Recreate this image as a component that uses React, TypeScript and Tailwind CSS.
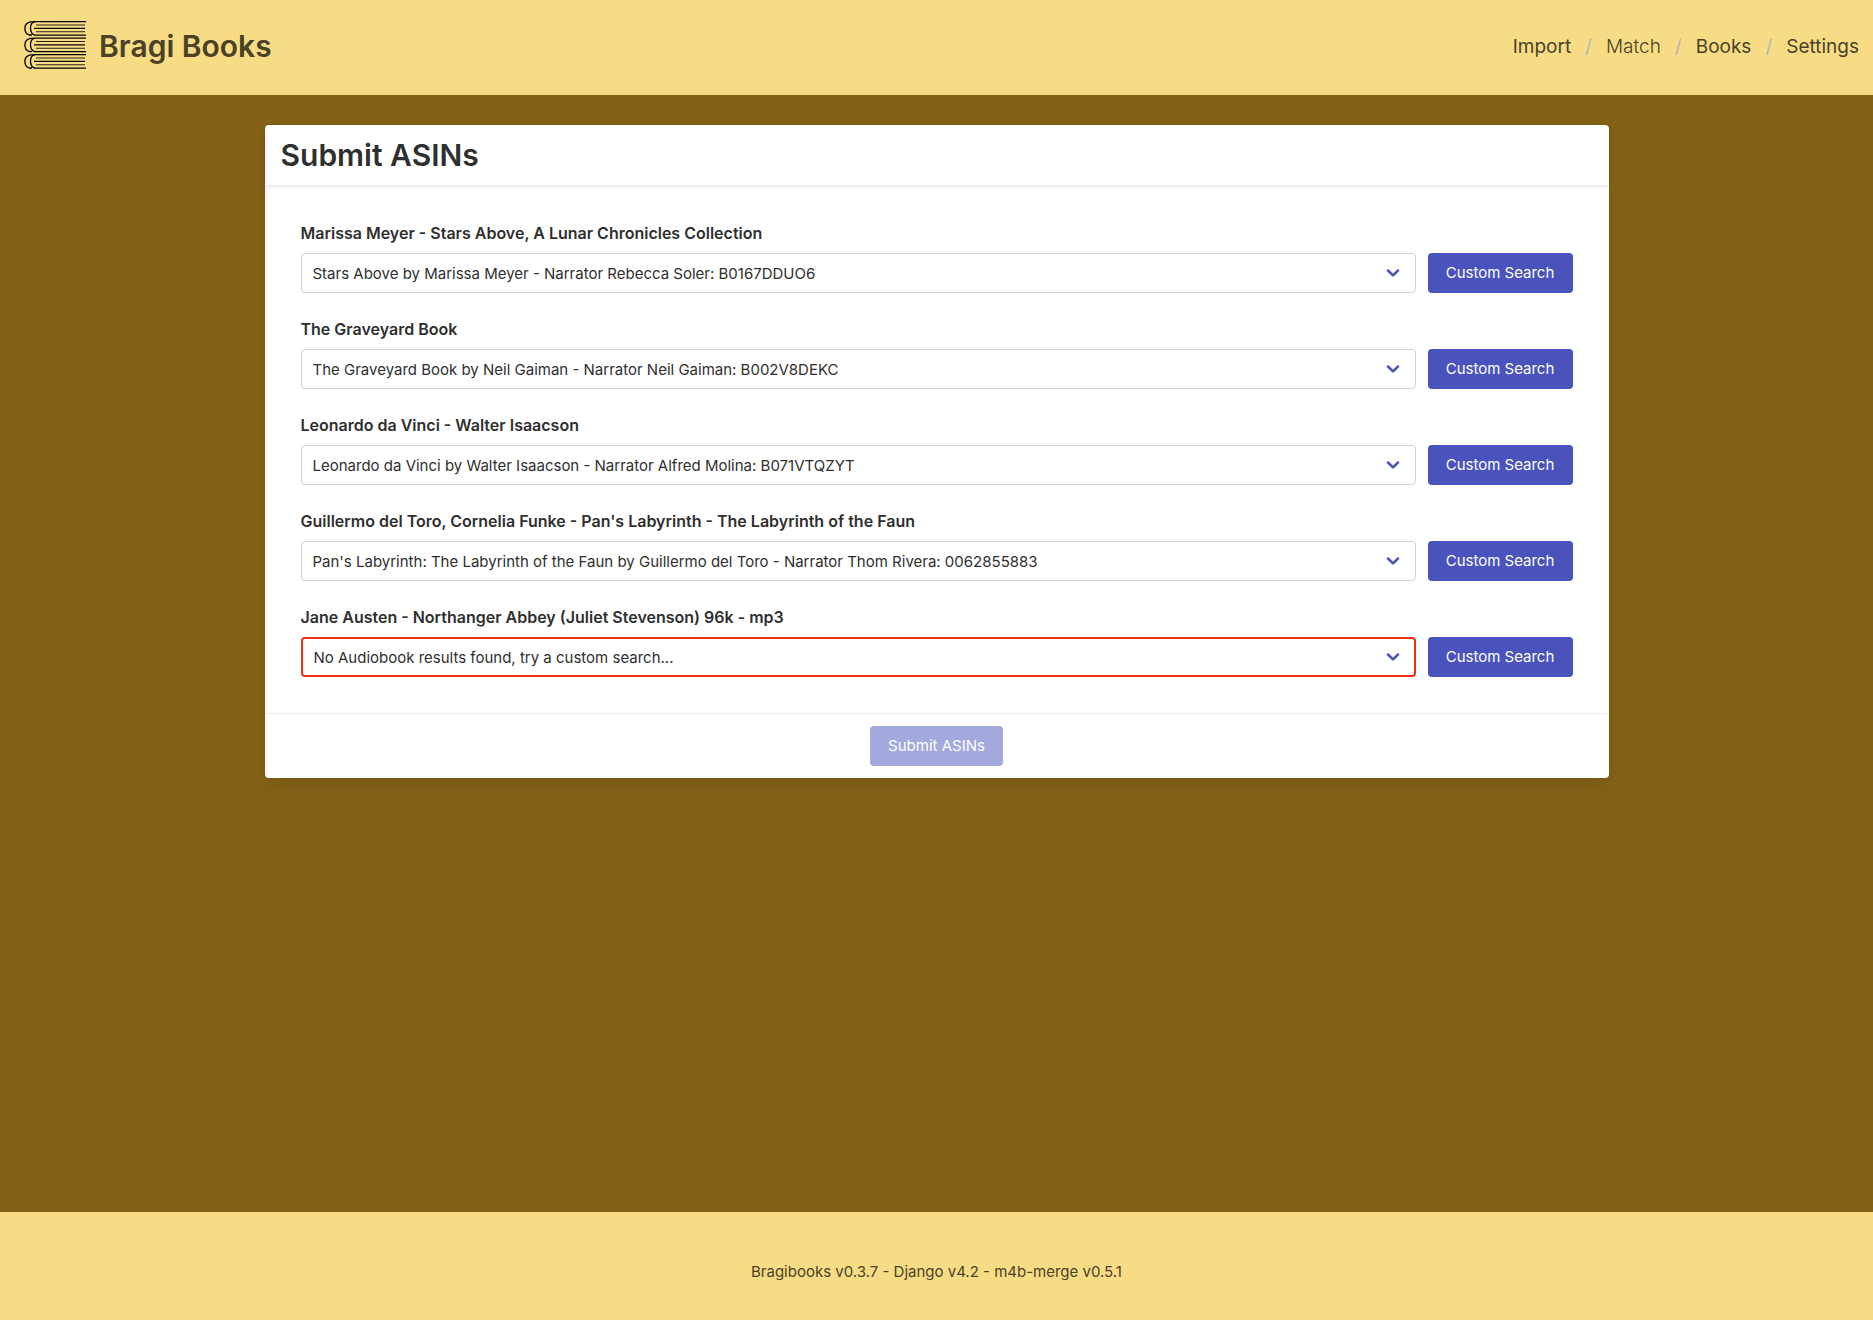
import { Fragment } from "react";

type Book = { id: string; folder: string; match: string; missing?: boolean };

const books: Book[] = [
  {
    id: "stars-above",
    folder: "Marissa Meyer - Stars Above, A Lunar Chronicles Collection",
    match: "Stars Above by Marissa Meyer - Narrator Rebecca Soler: B0167DDUO6",
  },
  {
    id: "graveyard-book",
    folder: "The Graveyard Book",
    match: "The Graveyard Book by Neil Gaiman - Narrator Neil Gaiman: B002V8DEKC",
  },
  {
    id: "leonardo",
    folder: "Leonardo da Vinci - Walter Isaacson",
    match: "Leonardo da Vinci by Walter Isaacson - Narrator Alfred Molina: B071VTQZYT",
  },
  {
    id: "labyrinth",
    folder: "Guillermo del Toro, Cornelia Funke - Pan's Labyrinth - The Labyrinth of the Faun",
    match: "Pan's Labyrinth: The Labyrinth of the Faun by Guillermo del Toro - Narrator Thom Rivera: 0062855883",
  },
  {
    id: "northanger",
    folder: "Jane Austen - Northanger Abbey (Juliet Stevenson) 96k - mp3",
    match: "No Audiobook results found, try a custom search...",
    missing: true,
  },
];

const links = [
  { label: "Import", current: false },
  { label: "Match", current: true },
  { label: "Books", current: false },
  { label: "Settings", current: false },
];

function BookShape({ y }: { y: number }) {
  return (
    <g transform={`translate(0 ${y})`}>
      <path d="M62 .6H10.500C7.500 1.500 6.500 4 6.500 7.300S7.500 13 10.500 14.200H62" strokeWidth="1.3" />
      <path d="M11 .8H6.500C2.800 1.500 .9 4 .9 7.300S2.800 13.300 5 14H8" strokeWidth="1.3" />
      <path d="M12 4H61M12 10.700H61" strokeWidth="1.1" opacity=".85" />
      <path d="M10 7.400H61" strokeWidth="1.2" />
    </g>
  );
}

function Logo() {
  return (
    <svg
      className="h-12 w-[62px]"
      viewBox="0 0 62 48"
      fill="none"
      stroke="#000"
      aria-hidden="true"
    >
      <BookShape y={0} />
      <BookShape y={16.5} />
      <BookShape y={33} />
    </svg>
  );
}

function BookRow({ book }: { book: Book }) {
  return (
    <div>
      <label htmlFor={book.id} className="mb-2 block text-base leading-6 font-semibold">
        {book.folder}
      </label>
      <div className="flex gap-3">
        <div className="relative min-w-0 grow">
          <select
            id={book.id}
            className={
              book.missing
                ? "block h-10 w-full appearance-none rounded border-2 border-[#f03014] bg-white pt-0.5 pr-10 pl-[11px] text-[15px]"
                : "block h-10 w-full appearance-none rounded border border-[#d3d3d3] bg-white pt-0.5 pr-10 pl-[11px] text-[15px]"
            }
          >
            <option>{book.match}</option>
          </select>
          <svg
            className="pointer-events-none absolute top-4 right-4 h-2 w-[14px]"
            viewBox="0 0 14 8"
            fill="none"
            stroke="#4953bb"
            strokeWidth="2.5"
            strokeLinecap="round"
            strokeLinejoin="round"
            aria-hidden="true"
          >
            <path d="M2 1.500L7 6.300L12 1.500" />
          </svg>
        </div>
        <button
          type="button"
          className="h-10 w-[145px] shrink-0 rounded bg-[#4953bb] text-[15px] text-white"
        >
          Custom Search
        </button>
      </div>
    </div>
  );
}

export default function App() {
  return (
    <div className="flex min-h-screen flex-col bg-[#836217] font-[Inter,'Liberation_Sans',sans-serif] text-[#2f2f2f]">
      <header className="flex items-center justify-between bg-[#f8dc85] pt-[21px] pr-[14px] pb-[23px] pl-6 text-[#4a4227]">
        <a href="#home" className="flex items-start gap-[13px]">
          <Logo />
          <span className="text-[30px] leading-[51px] font-semibold">Bragi Books</span>
        </a>
        <nav aria-label="Main" className="flex items-center gap-3.5 text-[19px] leading-[51px]">
          {links.map((link, i) => (
            <Fragment key={link.label}>
              {i > 0 && <span className="text-[#b5b5b5]">/</span>}
              <a
                href={`#${link.label.toLowerCase()}`}
                aria-current={link.current ? "page" : undefined}
                className={link.current ? "font-light" : "font-normal"}
              >
                {link.label}
              </a>
            </Fragment>
          ))}
        </nav>
      </header>

      <main className="grow px-8 pt-[30px] pb-8">
        <form className="mx-auto max-w-[1344px] rounded bg-white shadow-[0_8px_16px_-2px_rgba(10,10,10,0.1),0_0_0_1px_rgba(10,10,10,0.02)]">
          <div className="px-4 py-1.5 shadow-[0_2px_4px_rgba(10,10,10,0.1)]">
            <h1 className="text-[30px] leading-[48px] font-semibold">Submit ASINs</h1>
          </div>
          <div className="flex flex-col gap-6 p-9">
            {books.map((book) => (
              <BookRow key={book.id} book={book} />
            ))}
          </div>
          <div className="flex justify-center border-t border-[#ededed] p-3">
            <button
              type="submit"
              disabled
              className="h-10 w-[133px] rounded bg-[#a4a9dd] text-[15px] text-white"
            >
              Submit ASINs
            </button>
          </div>
        </form>
      </main>

      <footer className="bg-[#f8dc85] pt-12 pb-9 text-center text-[15px] leading-6 text-[#4a4227]">
        Bragibooks v0.3.7 - Django v4.2 - m4b-merge v0.5.1
      </footer>
    </div>
  );
}
